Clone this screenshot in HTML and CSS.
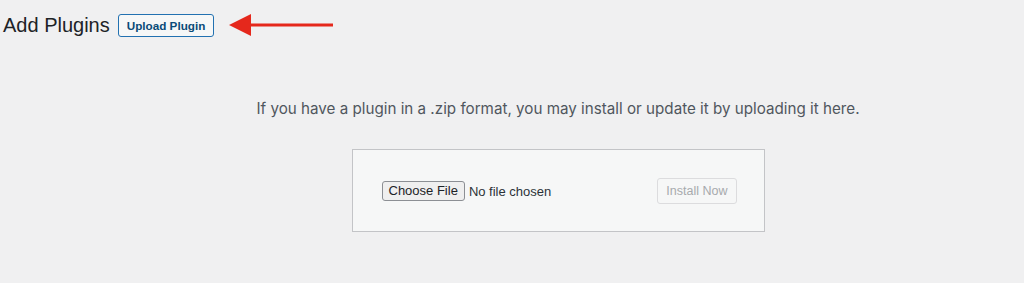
FILE: index.html
```html
<!DOCTYPE html>
<html>
<head>
  <title>Add Plugins</title>
  <link rel="stylesheet" href="styles.css">
</head>
<body>
  <div class="wrap">
    <div class="page-header">
      <h1 class="page-title">Add Plugins</h1>
      <a class="page-title-action" href="#">Upload Plugin</a>
      <svg class="arrow" width="106" height="24" viewBox="0 0 106 24">
        <polygon points="0,12 22,1 22,23" fill="#e5281c"/>
        <rect x="20" y="10.5" width="84" height="3" fill="#e5281c"/>
      </svg>
    </div>

    <div class="upload-plugin">
      <p class="install-help">If you have a plugin in a .zip format, you may install or update it by uploading it here.</p>
      <form class="upload-form">
        <input type="file" class="file-input">
        <button type="button" class="button" disabled>Install Now</button>
      </form>
    </div>
  </div>
</body>
</html>
```

FILE: styles.css
```css
body {
  margin: 0;
  background-color: #f0f0f1;
  font-family: "Liberation Sans", Arial, sans-serif;
  color: #1d2327;
}

.page-header {
  display: flex;
  align-items: center;
  padding: 13px 0 0 3px;
  height: 24px;
}

.page-title {
  margin: 0;
  font-size: 20px;
  font-weight: 400;
  color: #1d2327;
}

.page-title-action {
  margin-left: 8px;
  height: 23px;
  box-sizing: border-box;
  padding: 0 8px;
  display: flex;
  align-items: center;
  border: 1px solid #2271b1;
  border-radius: 3px;
  background-color: #f6f7f7;
  color: #0a4b78;
  font-size: 11.7px;
  font-weight: bold;
  text-decoration: none;
}

.arrow {
  margin-left: 15px;
}

.upload-plugin {
  display: flex;
  flex-direction: column;
  align-items: center;
  padding-left: 92px;
}

.install-help {
  margin: 63px 0 0;
  font-family: Inter, "Liberation Sans", sans-serif;
  font-size: 15.2px;
  line-height: 18px;
  color: #50575e;
}

.upload-form {
  margin-top: 31px;
  width: 413px;
  height: 83px;
  box-sizing: border-box;
  padding: 0 27px 0 29px;
  display: flex;
  align-items: center;
  justify-content: space-between;
  border: 1px solid #c3c4c7;
  background-color: #f6f7f7;
}

.file-input {
  font-family: "Liberation Sans", Arial, sans-serif;
  font-size: 13px;
  color: #2c3338;
}

.file-input::file-selector-button {
  font-family: "Liberation Sans", Arial, sans-serif;
  font-size: 13px;
  height: 20px;
  padding: 0 6px;
  margin-right: 4px;
  border: 1px solid #8c8f94;
  border-radius: 3px;
  background-color: #efefef;
  color: #1d2327;
}

.button {
  height: 26px;
  padding: 0 8px;
  border: 1px solid #dcdcde;
  border-radius: 3px;
  background-color: #f6f7f7;
  color: #a7aaad;
  font-family: "Liberation Sans", Arial, sans-serif;
  font-size: 12.5px;
}
```
